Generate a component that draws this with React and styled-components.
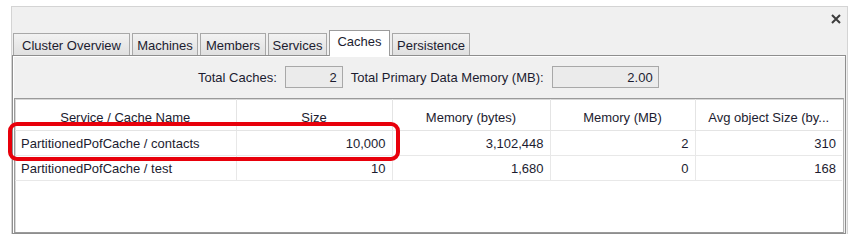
import React from 'react';
import styled, { createGlobalStyle, css } from 'styled-components';

const GlobalStyle = createGlobalStyle`
  body {
    margin: 0;
    background: #ffffff;
    font-family: Tahoma, "Liberation Sans", "DejaVu Sans", sans-serif;
  }
`;

const Frame = styled.div`
  position: relative;
  margin: 6px 0 0 11px;
  width: 835px;
  border: 1px solid #d4d4d4;
  border-bottom: none;
  background: #f0f0f0;
`;

const TitleBar = styled.div`
  height: 23px;
  display: flex;
  justify-content: flex-end;
  align-items: center;
  padding-right: 6px;
`;

const TabRow = styled.div`
  height: 25px;
  display: flex;
  align-items: flex-end;
  gap: 2px;
  padding-left: 1px;
`;

const Tab = styled.div`
  width: ${({ w }) => w}px;
  box-sizing: border-box;
  height: 22px;
  padding-top: 1px;
  display: flex;
  align-items: center;
  justify-content: center;
  font-size: 13px;
  color: #1c1c30;
  border: 1px solid #a8a8a8;
  border-bottom: none;
  background: linear-gradient(#f2f2f2, #e0e0e0);
  ${({ active }) =>
    active &&
    css`
      height: 26px;
      padding: 0 0 4px;
      background: #ffffff;
      border-color: #9c9c9c;
      position: relative;
      z-index: 1;
      margin-bottom: -1px;
    `}
`;

const Content = styled.div`
  width: 830px;
  border: 1px solid #8e8e8e;
  box-shadow: inset 1px 1px 0 #ffffff;
  padding: 0 1px 0 1px;
`;

const Summary = styled.div`
  height: 42px;
  display: flex;
  align-items: center;
  padding-left: 184px;
  gap: 8px;
  font-size: 13px;
  color: #1c1c30;
`;

const Field = styled.div`
  width: ${({ w }) => w}px;
  height: 22px;
  box-sizing: border-box;
  border: 1px solid #a8a8a8;
  background: #ebebeb;
  display: flex;
  align-items: center;
  justify-content: flex-end;
  padding-right: 5px;
`;

const TableBox = styled.div`
  height: 133px;
  background: #ffffff;
  border: 1px solid #9a9a9a;
  border-right-color: #b4b4b4;
  box-shadow: inset 1px 1px 0 #d8d8d8;
`;

const Grid = styled.table`
  border-collapse: collapse;
  table-layout: fixed;
  width: 827px;
  font-size: 13px;
  color: #1c1c30;
`;

const HeadCell = styled.th`
  height: 25px;
  padding: 6px 0 0;
  font-weight: normal;
  text-align: center;
  border-right: 1px solid #e4e4e4;
  border-bottom: 1px solid #e4e4e4;
  white-space: nowrap;
  overflow: hidden;
  &:last-child {
    border-right: none;
  }
`;

const Cell = styled.td`
  height: 24px;
  padding: 0 6px;
  text-align: ${({ left }) => (left ? 'left' : 'right')};
  border-right: 1px solid #e8e8e8;
  border-bottom: 1px solid #e8e8e8;
  white-space: nowrap;
  &:last-child {
    border-right: none;
  }
`;

const Highlight = styled.div`
  position: absolute;
  left: -4px;
  top: 115px;
  width: 384px;
  height: 31px;
  border: 4px solid #e8000b;
  border-radius: 9px;
  pointer-events: none;
`;

const CloseIcon = () => (
  <svg width="10" height="10" viewBox="0 0 10 10">
    <path d="M1 1 L9 9 M9 1 L1 9" stroke="#3c3c3c" strokeWidth="2" />
  </svg>
);

const tabs = [
  { label: 'Cluster Overview', width: 117 },
  { label: 'Machines', width: 66 },
  { label: 'Members', width: 66 },
  { label: 'Services', width: 59 },
  { label: 'Caches', width: 61 },
  { label: 'Persistence', width: 78 },
];
const columns = [
  { title: 'Service / Cache Name', width: 221 },
  { title: 'Size', width: 156 },
  { title: 'Memory (bytes)', width: 158 },
  { title: 'Memory (MB)', width: 145 },
  { title: 'Avg object Size (by...', width: 147 },
];
const rows = [
  ['PartitionedPofCache / contacts', '10,000', '3,102,448', '2', '310'],
  ['PartitionedPofCache / test', '10', '1,680', '0', '168'],
];

const App = () => (
  <>
    <GlobalStyle />
    <Frame>
      <TitleBar>
        <CloseIcon />
      </TitleBar>
      <TabRow>
        {tabs.map((t) => (
          <Tab key={t.label} w={t.width} active={t.label === 'Caches'}>
            {t.label}
          </Tab>
        ))}
      </TabRow>
      <Content>
        <Summary>
          <span>Total Caches:</span>
          <Field w={58}>2</Field>
          <span>Total Primary Data Memory (MB):</span>
          <Field w={107}>2.00</Field>
        </Summary>
        <TableBox>
          <Grid>
            <colgroup>
              {columns.map((c) => (
                <col key={c.title} style={{ width: c.width }} />
              ))}
            </colgroup>
            <thead>
              <tr>
                {columns.map((c) => (
                  <HeadCell key={c.title}>{c.title}</HeadCell>
                ))}
              </tr>
            </thead>
            <tbody>
              {rows.map((r) => (
                <tr key={r[0]}>
                  {r.map((v, i) => (
                    <Cell key={i} left={i === 0}>
                      {v}
                    </Cell>
                  ))}
                </tr>
              ))}
            </tbody>
          </Grid>
        </TableBox>
      </Content>
      <Highlight />
    </Frame>
  </>
);

export default App;
